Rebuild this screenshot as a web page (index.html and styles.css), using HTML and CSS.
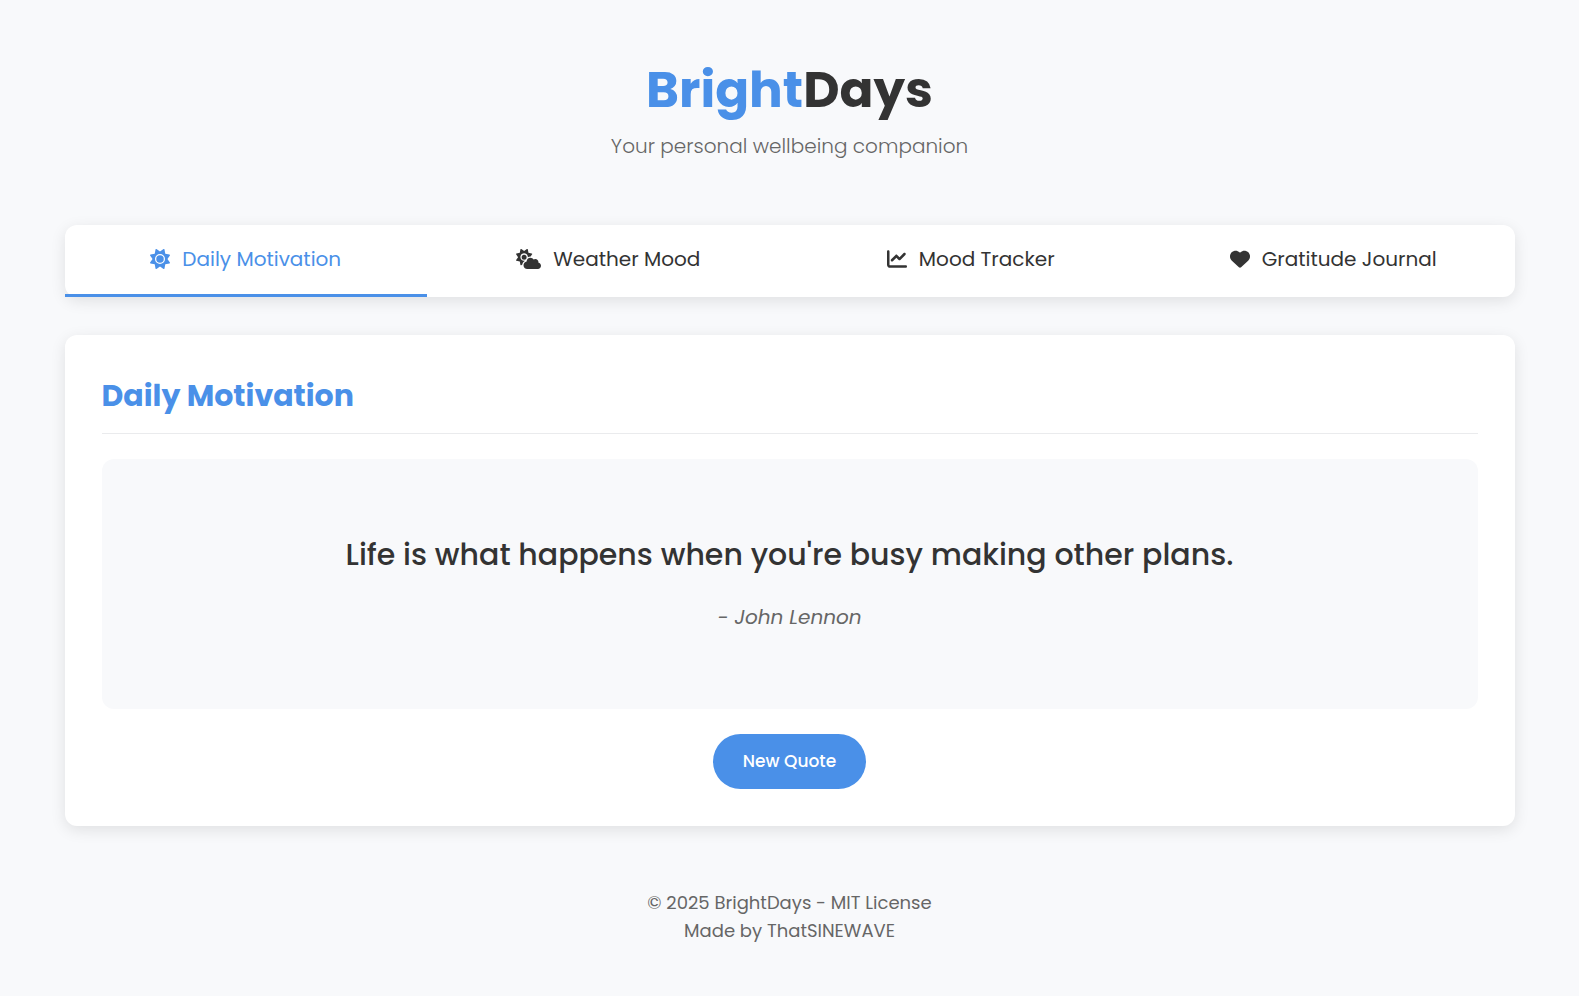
FILE: index.html
```html
<!DOCTYPE html>
<html lang="en">
<head>
<meta charset="utf-8">
<meta name="viewport" content="width=device-width, initial-scale=1">
<title>BrightDays</title>
<link rel="stylesheet" href="styles.css">
</head>
<body>
<div class="container">
  <header class="header">
    <h1 class="logo"><span class="logo-accent">Bright</span>Days</h1>
    <p class="tagline">Your personal wellbeing companion</p>
  </header>

  <nav class="tabs">
    <button class="tab active" type="button">
      <svg class="icon" viewBox="0 0 512 512" aria-hidden="true"><path d="M361.5 1.2c5 2.1 8.6 6.6 9.6 11.9L391 121l107.9 19.8c5.3 1 9.8 4.6 11.9 9.6s1.5 10.7-1.6 15.2L446.9 256l62.3 90.3c3.1 4.5 3.7 10.2 1.6 15.2s-6.6 8.6-11.9 9.6L391 391 371.1 498.9c-1 5.3-4.6 9.8-9.6 11.9s-10.7 1.5-15.2-1.6L256 446.9l-90.3 62.3c-4.5 3.1-10.2 3.7-15.2 1.6s-8.6-6.6-9.6-11.9L121 391 13.1 371.1c-5.3-1-9.8-4.6-11.9-9.6s-1.5-10.7 1.6-15.2L65.1 256 2.8 165.7c-3.1-4.5-3.7-10.2-1.6-15.2s6.6-8.6 11.9-9.6L121 121 140.9 13.1c1-5.3 4.6-9.8 9.6-11.9s10.7-1.5 15.2 1.6L256 65.1 346.3 2.8c4.5-3.1 10.2-3.7 15.2-1.6zM160 256a96 96 0 1 1 192 0 96 96 0 1 1 -192 0zm224 0a128 128 0 1 0 -256 0 128 128 0 1 0 256 0z"/></svg>
      <span>Daily Motivation</span>
    </button>
    <button class="tab" type="button">
      <svg class="icon icon-wide" viewBox="0 0 640 512" aria-hidden="true"><path d="M294.2 1.2c5.1 2.1 8.7 6.7 9.6 12.1l14.1 84.7 84.7 14.1c5.4 .9 10 4.5 12.1 9.6s1.5 10.9-1.6 15.4l-38.5 55c-2.2-.1-4.4-.2-6.7-.2c-23.3 0-45.1 6.2-64 17.1l0-1.1c0-53-43-96-96-96s-96 43-96 96s43 96 96 96c8.1 0 15.9-1 23.4-2.9c-36.6 18.1-63.3 53.1-69.8 94.9l-24.4 17c-4.5 3.2-10.3 3.8-15.4 1.6s-8.7-6.7-9.6-12.1L98.1 317.9 13.4 303.8c-5.4-.9-10-4.5-12.1-9.6s-1.5-10.9 1.6-15.4L52.5 208 2.9 137.2c-3.2-4.5-3.8-10.3-1.6-15.4s6.7-8.7 12.1-9.6L98.1 98.1l14.1-84.7c.9-5.4 4.5-10 9.6-12.1s10.9-1.5 15.4 1.6L208 52.5 278.8 2.9c4.5-3.2 10.3-3.8 15.4-1.6zM144 208a64 64 0 1 1 128 0 64 64 0 1 1 -128 0zM639.9 431.9c0 44.2-35.8 80-80 80l-271.9 0c-53 0-96-43-96-96c0-47.6 34.6-87 80-94.6l0-1.3c0-53 43-96 96-96c34.9 0 65.4 18.6 82.2 46.4c13-9.1 28.8-14.4 45.8-14.4c44.2 0 80 35.8 80 80c0 5.9-.6 11.7-1.9 17.2c37.4 6.7 65.8 39.4 65.8 78.7z"/></svg>
      <span>Weather Mood</span>
    </button>
    <button class="tab" type="button">
      <svg class="icon" viewBox="0 0 512 512" aria-hidden="true"><path d="M64 64c0-17.7-14.3-32-32-32S0 46.3 0 64L0 400c0 44.2 35.8 80 80 80l400 0c17.7 0 32-14.3 32-32s-14.3-32-32-32L80 416c-8.8 0-16-7.2-16-16L64 64zm406.6 86.6c12.5-12.5 12.5-32.8 0-45.3s-32.8-12.5-45.3 0L320 210.7l-57.4-57.4c-12.5-12.5-32.8-12.5-45.3 0l-112 112c-12.5 12.5-12.5 32.8 0 45.3s32.8 12.5 45.3 0L240 221.3l57.4 57.4c12.5 12.5 32.8 12.5 45.3 0l128-128z"/></svg>
      <span>Mood Tracker</span>
    </button>
    <button class="tab" type="button">
      <svg class="icon" viewBox="0 0 512 512" aria-hidden="true"><path d="M47.6 300.4L228.3 469.1c7.5 7 17.4 10.9 27.7 10.9s20.2-3.9 27.7-10.9L464.4 300.4c30.4-28.3 47.6-68 47.6-109.5v-5.8c0-69.9-50.5-129.5-119.4-141C347 36.5 300.6 51.4 268 84L256 96 244 84c-32.6-32.6-79-47.5-124.6-39.9C50.5 55.6 0 115.2 0 185.1v5.8c0 41.5 17.2 81.2 47.6 109.5z"/></svg>
      <span>Gratitude Journal</span>
    </button>
  </nav>

  <main class="card">
    <h2 class="card-title">Daily Motivation</h2>
    <div class="quote-box">
      <p class="quote">Life is what happens when you're busy making other plans.</p>
      <p class="author">- John Lennon</p>
    </div>
    <button class="new-quote" type="button">New Quote</button>
  </main>

  <footer class="footer">
    <p>© 2025 BrightDays - MIT License</p>
    <p>Made by ThatSINEWAVE</p>
  </footer>
</div>
</body>
</html>
```
FILE: styles.css
```css
* {
  box-sizing: border-box;
  margin: 0;
  padding: 0;
}

body {
  background: #f8f9fb;
  color: #333;
  font-family: "Poppins", "Inter", sans-serif;
  font-size: 20px;
  line-height: 32px;
}

button {
  border: 0;
  color: inherit;
  font-family: inherit;
  cursor: pointer;
}

.container {
  max-width: 1500px;
  margin: 0 auto;
  padding: 25px;
}

.header {
  padding: 25px 0 62px;
  text-align: center;
}

.logo {
  font-size: 50px;
  font-weight: 700;
  line-height: 80px;
}

.logo-accent {
  color: #4a90e8;
}

.tagline {
  color: #666;
  font-size: 20px;
  font-weight: 300;
  line-height: 33px;
}

.tabs {
  display: flex;
  background: #fff;
  border-radius: 12px;
  box-shadow: 0 4px 15px rgba(0, 0, 0, 0.1);
}

.tab {
  flex: 1;
  display: flex;
  align-items: center;
  justify-content: center;
  gap: 12px;
  padding: 18px 12px 19px;
  background: transparent;
  border-bottom: 3px solid transparent;
  font-size: 20px;
  line-height: 32px;
}

.tab.active {
  border-bottom-color: #4a90e8;
  color: #4a90e8;
}

.icon {
  width: 20px;
  height: 20px;
  fill: currentColor;
}

.icon-wide {
  width: 25px;
}

.card {
  margin-top: 38px;
  padding: 37px;
  background: #fff;
  border-radius: 12px;
  box-shadow: 0 4px 15px rgba(0, 0, 0, 0.1);
}

.card-title {
  margin-bottom: 25px;
  padding-bottom: 13px;
  border-bottom: 1px solid #eaebed;
  color: #4a90e8;
  font-size: 30px;
  font-weight: 700;
  line-height: 48px;
}

.quote-box {
  display: flex;
  flex-direction: column;
  align-items: center;
  justify-content: center;
  gap: 22px;
  min-height: 250px;
  padding: 37px 37px 41px;
  background: #f8f9fb;
  border-radius: 12px;
  text-align: center;
}

.quote {
  font-size: 30px;
  font-weight: 500;
  line-height: 48px;
}

.author {
  color: #666;
  font-style: italic;
}

.new-quote {
  display: block;
  margin: 25px auto 0;
  padding: 15px 30px;
  background: #4a90e8;
  border-radius: 30px;
  color: #fff;
  font-size: 17px;
  font-weight: 500;
  line-height: 25px;
}

.footer {
  padding: 63px 0 25px;
  color: #666;
  font-size: 18px;
  line-height: 28px;
  text-align: center;
}
```
